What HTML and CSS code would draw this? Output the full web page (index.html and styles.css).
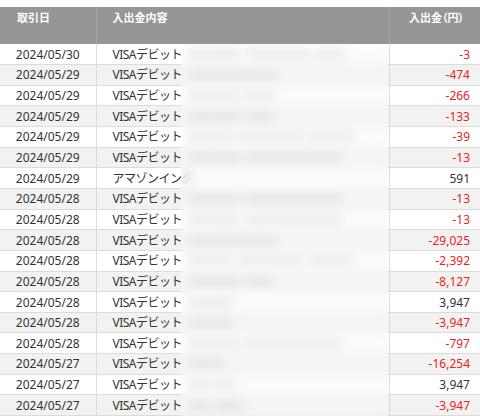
FILE: index.html
```html
<!DOCTYPE html>
<html lang="ja">
<head>
<meta charset="utf-8">
<link rel="stylesheet" href="styles.css">
</head>
<body>
<div class="wrap">
<table class="tbl">
<thead>
<tr><th class="c-date">取引日</th><th class="c-desc">入出金内容</th><th class="c-amt">入出金（円）</th></tr>
</thead>
<tbody>
<tr><td class="c-date">2024/05/30</td><td class="c-desc">VISAデビット<span class="m">XXXXXXX *XXXXXXXX XXXX</span></td><td class="c-amt neg">-3</td></tr>
<tr><td class="c-date">2024/05/29</td><td class="c-desc">VISAデビット<span class="m">XXXXXXXXXXXX</span></td><td class="c-amt neg">-474</td></tr>
<tr><td class="c-date">2024/05/29</td><td class="c-desc">VISAデビット<span class="m">XXXXXXX XXXX</span></td><td class="c-amt neg">-266</td></tr>
<tr><td class="c-date">2024/05/29</td><td class="c-desc">VISAデビット<span class="m">XXXXXXX XXXX</span></td><td class="c-amt neg">-133</td></tr>
<tr><td class="c-date">2024/05/29</td><td class="c-desc">VISAデビット<span class="m">XXXXXX XXXXXXXXX XXXXXX</span></td><td class="c-amt neg">-39</td></tr>
<tr><td class="c-date">2024/05/29</td><td class="c-desc">VISAデビット<span class="m">XXXXXXX XXXXXXXXXXXXX</span></td><td class="c-amt neg">-13</td></tr>
<tr><td class="c-date">2024/05/29</td><td class="c-desc">アマゾンインク<span class="m w"> </span></td><td class="c-amt">591</td></tr>
<tr><td class="c-date">2024/05/28</td><td class="c-desc">VISAデビット<span class="m">XXXXXXX XXXXXXXXXXXXX</span></td><td class="c-amt neg">-13</td></tr>
<tr><td class="c-date">2024/05/28</td><td class="c-desc">VISAデビット<span class="m">XXXXXXX XXXXXXXXXXXXX</span></td><td class="c-amt neg">-13</td></tr>
<tr><td class="c-date">2024/05/28</td><td class="c-desc">VISAデビット<span class="m">XXXXXXXXXXXX</span></td><td class="c-amt neg">-29,025</td></tr>
<tr><td class="c-date">2024/05/28</td><td class="c-desc">VISAデビット<span class="m">XXXXXX XXXXXXXXX XXXXXX</span></td><td class="c-amt neg">-2,392</td></tr>
<tr><td class="c-date">2024/05/28</td><td class="c-desc">VISAデビット<span class="m">XXXXXXX XXXX</span></td><td class="c-amt neg">-8,127</td></tr>
<tr><td class="c-date">2024/05/28</td><td class="c-desc">VISAデビット<span class="m">XXXXXX</span></td><td class="c-amt">3,947</td></tr>
<tr><td class="c-date">2024/05/28</td><td class="c-desc">VISAデビット<span class="m">XXXXXX</span></td><td class="c-amt neg">-3,947</td></tr>
<tr><td class="c-date">2024/05/28</td><td class="c-desc">VISAデビット<span class="m">XXXXXXX XXXXXXXXXXXXX</span></td><td class="c-amt neg">-797</td></tr>
<tr><td class="c-date">2024/05/27</td><td class="c-desc">VISAデビット<span class="m">XXXXX</span></td><td class="c-amt neg">-16,254</td></tr>
<tr><td class="c-date">2024/05/27</td><td class="c-desc">VISAデビット<span class="m">XXX XXX</span></td><td class="c-amt">3,947</td></tr>
<tr><td class="c-date">2024/05/27</td><td class="c-desc">VISAデビット<span class="m">XXX XXXX</span></td><td class="c-amt neg">-3,947</td></tr>
</tbody>
</table>
<div class="mask"></div>
</div>
</body>
</html>
```

FILE: styles.css
```css
html, body {
  margin: 0;
  padding: 0;
  background: #fff;
}
body {
  font-family: "Noto Sans", "Noto Sans CJK JP", sans-serif;
  font-size: 12px;
  color: #333;
}
.wrap {
  position: relative;
  padding-top: 7px;
  width: 480px;
  overflow: hidden;
}
.tbl {
  width: 480px;
  border-collapse: collapse;
  table-layout: fixed;
}
.tbl th {
  background: #969696;
  color: #fff;
  font-weight: bold;
  font-size: 11px;
  height: 37px;
  padding: 2px 0 0 0;
  vertical-align: top;
  text-align: left;
  border-right: 1px solid #a6a6a6;
  box-sizing: border-box;
  line-height: 18px;
}
.tbl th:last-child { border-right: none; }
.tbl th.c-date { width: 96px; padding-left: 17px; }
.tbl th.c-desc { padding-left: 16px; }
.tbl th.c-amt {
  width: 91px;
  text-align: right;
  padding-right: 16px;
  font-feature-settings: "palt";
}
.tbl td {
  height: 20.65px;
  padding: 0;
  border-bottom: 1px solid #dcdcdc;
  border-right: 1px solid #dcdcdc;
  white-space: nowrap;
  overflow: hidden;
  line-height: 19px;
  box-sizing: border-box;
}
.tbl td:last-child { border-right: none; }
.tbl tbody tr:nth-child(even) td { background: #f2f2f2; }
.tbl td.c-date { text-align: center; }
.tbl td.c-desc { padding-left: 16px; letter-spacing: -0.5px; }
.tbl td.c-amt { text-align: right; padding-right: 10px; }
.tbl td.neg { color: #e8251f; }
.m {
  color: #9a9a9a;
  margin-left: 6px;
  letter-spacing: 0.5px;
}
.mask {
  position: absolute;
  left: 181px;
  top: 44px;
  width: 207px;
  bottom: 0;
  backdrop-filter: blur(5px);
  background: rgba(248, 248, 248, 0.45);
}
```
